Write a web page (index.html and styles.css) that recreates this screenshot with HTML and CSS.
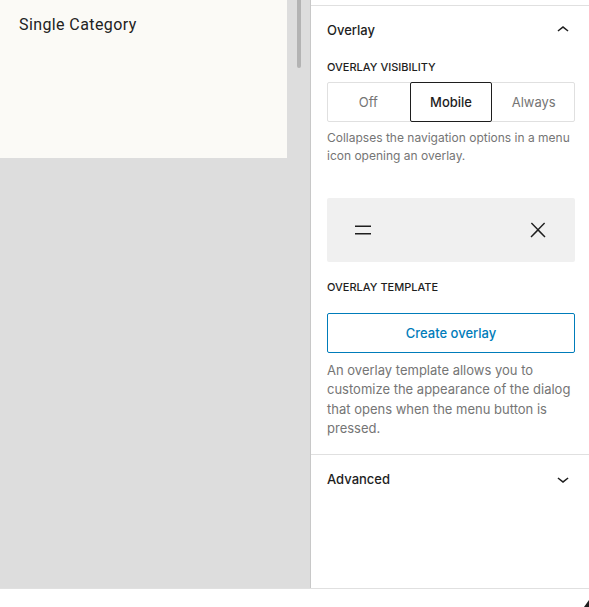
FILE: index.html
```html
<!DOCTYPE html>
<html lang="en">
<head>
    <meta charset="UTF-8">
    <meta name="viewport" content="width=device-width, initial-scale=1.0">
    <title>Navigation overlay</title>
    <link rel="stylesheet" href="styles.css">
</head>
<body>
    <div class="main">
        <div class="canvas">
            <div class="card">
                <p class="card-title">Single Category</p>
            </div>
            <div class="scroll-thumb"></div>
        </div>

        <div class="sidebar">
            <div class="panel">
                <div class="panel-header">
                    <span>Overlay</span>
                    <svg class="chevron" width="24" height="24" viewBox="0 0 24 24"><path d="M6.5 12.4L12 8l5.5 4.4-.9 1.2L12 10l-4.6 3.6-.9-1.2z"/></svg>
                </div>
                <div class="panel-body">
                    <div class="label">Overlay visibility</div>
                    <div class="toggle-group">
                        <button class="toggle">Off</button>
                        <button class="toggle active">Mobile</button>
                        <button class="toggle">Always</button>
                    </div>
                    <p class="help">Collapses the navigation options in a menu icon opening an overlay.</p>

                    <div class="preview">
                        <svg width="24" height="24" viewBox="0 0 24 24"><path d="M4 7.5h16V9H4V7.5zm0 7.5h16v1.5H4V15z"/></svg>
                        <svg width="24" height="24" viewBox="0 0 24 24"><path d="M13 11.8l6.1-6.3-1-1-6.1 6.2-6.1-6.2-1 1 6.1 6.3-6.5 6.7 1 1 6.5-6.6 6.5 6.6 1-1z"/></svg>
                    </div>

                    <div class="label label-template">Overlay template</div>
                    <button class="create-btn">Create overlay</button>
                    <p class="help help-big">An overlay template allows you to customize the appearance of the dialog that opens when the menu button is pressed.</p>
                </div>
            </div>

            <div class="panel">
                <div class="panel-header">
                    <span>Advanced</span>
                    <svg class="chevron" width="24" height="24" viewBox="0 0 24 24"><path d="M17.5 11.6L12 16l-5.5-4.4.9-1.2L12 14l4.6-3.6 1 1.2z"/></svg>
                </div>
            </div>
        </div>
    </div>

    <div class="footer">
        <span class="resize"></span>
    </div>
</body>
</html>
```

FILE: styles.css
```css
body {
    margin: 0;
    padding: 0;
    font-family: Inter, "Noto Sans", sans-serif;
    color: #1e1e1e;
    display: flex;
    flex-direction: column;
    height: 607px;
    overflow: hidden;
    background-color: #ffffff;
}

.main {
    display: flex;
    height: 588px;
}

/* editor canvas */
.canvas {
    width: 310px;
    flex-shrink: 0;
    background-color: #dddddd;
    display: flex;
    align-items: flex-start;
}

.card {
    width: 287px;
    height: 158px;
    background-color: #fbfaf6;
}

.card-title {
    margin: 15px 0 0 19px;
    font-family: Roboto, "Liberation Sans", sans-serif;
    font-size: 16px;
    line-height: 20px;
    letter-spacing: 0.4px;
    color: #222222;
}

.scroll-thumb {
    width: 4px;
    height: 68px;
    margin-left: 10px;
    border-radius: 0 0 2px 2px;
    background-color: #b3b3b3;
}

/* settings sidebar */
.sidebar {
    flex-grow: 1;
    border-left: 1px solid #c8c8c8;
    padding-top: 5px;
}

.panel {
    border-top: 1px solid #e0e0e0;
}

.panel-header {
    height: 48px;
    padding: 0 14px 0 16px;
    display: flex;
    align-items: center;
    justify-content: space-between;
    font-size: 13px;
    font-weight: 500;
}

.chevron {
    fill: #1e1e1e;
}

.panel-body {
    padding: 5px 14px 16px 16px;
}

.label {
    font-size: 11px;
    font-weight: 500;
    line-height: 16px;
    text-transform: uppercase;
    margin-bottom: 7px;
}

.label-template {
    margin-top: 17px;
    margin-bottom: 18px;
}

.toggle-group {
    display: flex;
    height: 40px;
    border: 1px solid #e0e0e0;
    border-radius: 2px;
    box-sizing: border-box;
}

.toggle {
    flex: 1;
    margin: -1px 0;
    background: none;
    border: 1px solid transparent;
    border-radius: 2px;
    font-family: inherit;
    font-size: 13px;
    color: #757575;
}

.toggle:first-child {
    margin-left: -1px;
}

.toggle:last-child {
    margin-right: -1px;
}

.toggle.active {
    border-color: #1e1e1e;
    color: #1e1e1e;
    font-weight: 500;
}

.help {
    margin: 7px 0 0;
    font-size: 12px;
    line-height: 18px;
    color: #757575;
}

.help-big {
    margin-top: 8px;
    font-size: 13px;
    line-height: 19.3px;
}

.preview {
    margin-top: 33px;
    height: 64px;
    border-radius: 2px;
    background-color: #f0f0f0;
    display: flex;
    align-items: center;
    justify-content: space-between;
    padding: 0 25px 0 24px;
}

.preview svg {
    fill: #1e1e1e;
}

.create-btn {
    display: block;
    width: 100%;
    height: 40px;
    background: #ffffff;
    border: 1px solid #007cba;
    border-radius: 2px;
    color: #007cba;
    font-family: inherit;
    font-size: 13px;
    font-weight: 500;
}

/* footer strip */
.footer {
    flex-grow: 1;
    border-top: 1px solid #e0e0e0;
    display: flex;
    justify-content: flex-end;
    align-items: flex-end;
}

.resize {
    width: 0;
    height: 0;
    border-left: 5px solid transparent;
    border-bottom: 7px solid #1e1e1e;
}
```
